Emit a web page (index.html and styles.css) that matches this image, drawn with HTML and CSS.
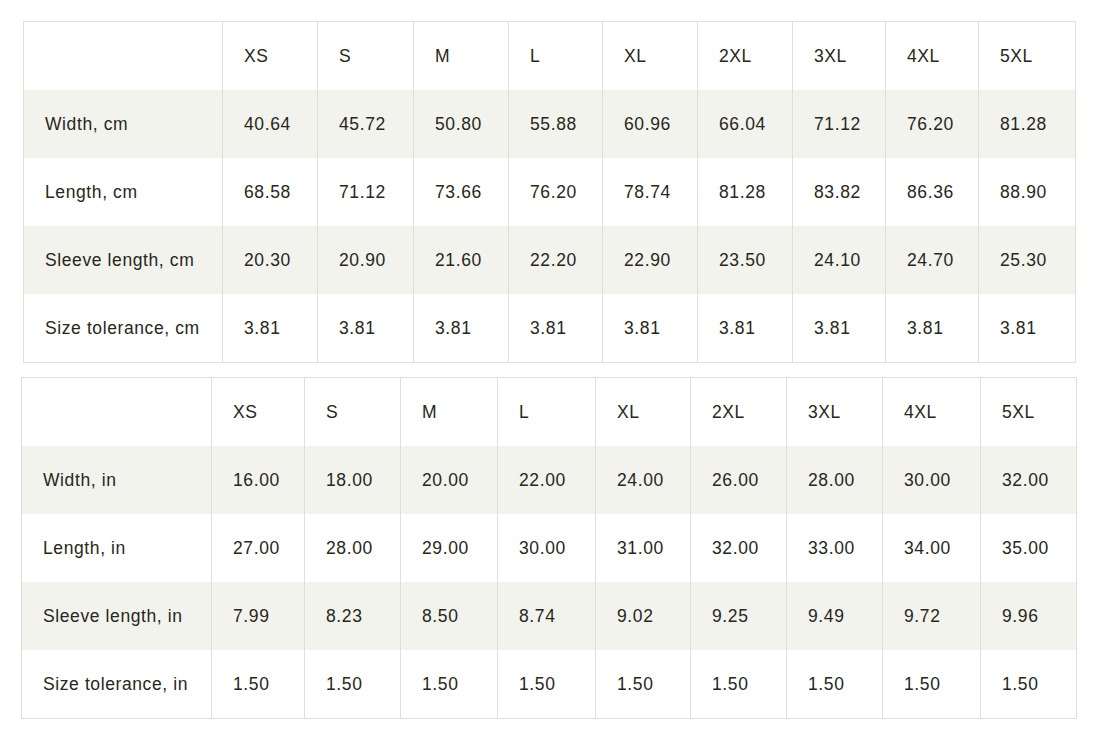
FILE: index.html
```html
<!DOCTYPE html>
<html lang="en">
<head>
<meta charset="utf-8">
<title>Size chart</title>
<link rel="stylesheet" href="styles.css">
</head>
<body>
<main class="page">
  <table class="chart chart-cm">
    <colgroup>
      <col class="c0"><col class="c1"><col class="c2"><col class="c3"><col class="c4"><col class="c5"><col class="c6"><col class="c7"><col class="c8"><col class="c9">
    </colgroup>
    <tr><td></td><td>XS</td><td>S</td><td>M</td><td>L</td><td>XL</td><td>2XL</td><td>3XL</td><td>4XL</td><td>5XL</td></tr>
    <tr class="alt"><td>Width, cm</td><td>40.64</td><td>45.72</td><td>50.80</td><td>55.88</td><td>60.96</td><td>66.04</td><td>71.12</td><td>76.20</td><td>81.28</td></tr>
    <tr><td>Length, cm</td><td>68.58</td><td>71.12</td><td>73.66</td><td>76.20</td><td>78.74</td><td>81.28</td><td>83.82</td><td>86.36</td><td>88.90</td></tr>
    <tr class="alt"><td>Sleeve length, cm</td><td>20.30</td><td>20.90</td><td>21.60</td><td>22.20</td><td>22.90</td><td>23.50</td><td>24.10</td><td>24.70</td><td>25.30</td></tr>
    <tr><td>Size tolerance, cm</td><td>3.81</td><td>3.81</td><td>3.81</td><td>3.81</td><td>3.81</td><td>3.81</td><td>3.81</td><td>3.81</td><td>3.81</td></tr>
  </table>
  <table class="chart chart-in">
    <colgroup>
      <col class="c0"><col class="c1"><col class="c2"><col class="c3"><col class="c4"><col class="c5"><col class="c6"><col class="c7"><col class="c8"><col class="c9">
    </colgroup>
    <tr><td></td><td>XS</td><td>S</td><td>M</td><td>L</td><td>XL</td><td>2XL</td><td>3XL</td><td>4XL</td><td>5XL</td></tr>
    <tr class="alt"><td>Width, in</td><td>16.00</td><td>18.00</td><td>20.00</td><td>22.00</td><td>24.00</td><td>26.00</td><td>28.00</td><td>30.00</td><td>32.00</td></tr>
    <tr><td>Length, in</td><td>27.00</td><td>28.00</td><td>29.00</td><td>30.00</td><td>31.00</td><td>32.00</td><td>33.00</td><td>34.00</td><td>35.00</td></tr>
    <tr class="alt"><td>Sleeve length, in</td><td>7.99</td><td>8.23</td><td>8.50</td><td>8.74</td><td>9.02</td><td>9.25</td><td>9.49</td><td>9.72</td><td>9.96</td></tr>
    <tr><td>Size tolerance, in</td><td>1.50</td><td>1.50</td><td>1.50</td><td>1.50</td><td>1.50</td><td>1.50</td><td>1.50</td><td>1.50</td><td>1.50</td></tr>
  </table>
</main>
</body>
</html>
```
FILE: styles.css
```css
html, body {
  margin: 0;
  padding: 0;
  background: #ffffff;
}

.page {
  padding-top: 21px;
  display: flex;
  flex-direction: column;
  gap: 14px;
}

.chart {
  border-collapse: collapse;
  table-layout: fixed;
  font-family: "Liberation Sans", Arial, sans-serif;
  font-size: 17.5px;
  letter-spacing: 0.6px;
  color: #27271a;
  border: 1px solid #e0e0d9;
}

.chart td {
  height: 68px;
  padding: 0 0 0 21px;
  vertical-align: middle;
  border-left: 1px solid #e0e0d9;
  border-right: 1px solid #e0e0d9;
  white-space: nowrap;
  line-height: 20px;
}

.chart tr.alt td {
  background: #f3f3ee;
}

.chart-cm {
  width: 1052px;
  margin-left: 23px;
}

.chart-cm .c0 { width: 199px; }
.chart-cm .c1 { width: 95px; }
.chart-cm .c2 { width: 96px; }
.chart-cm .c3 { width: 95px; }
.chart-cm .c4 { width: 94px; }
.chart-cm .c5 { width: 95px; }
.chart-cm .c6 { width: 95px; }
.chart-cm .c7 { width: 93px; }
.chart-cm .c8 { width: 93px; }
.chart-cm .c9 { width: 97px; }

.chart-in {
  width: 1055px;
  margin-left: 21px;
}

.chart-in .c0 { width: 190px; }
.chart-in .c1 { width: 93px; }
.chart-in .c2 { width: 96px; }
.chart-in .c3 { width: 97px; }
.chart-in .c4 { width: 98px; }
.chart-in .c5 { width: 95px; }
.chart-in .c6 { width: 96px; }
.chart-in .c7 { width: 96px; }
.chart-in .c8 { width: 98px; }
.chart-in .c9 { width: 96px; }
```
